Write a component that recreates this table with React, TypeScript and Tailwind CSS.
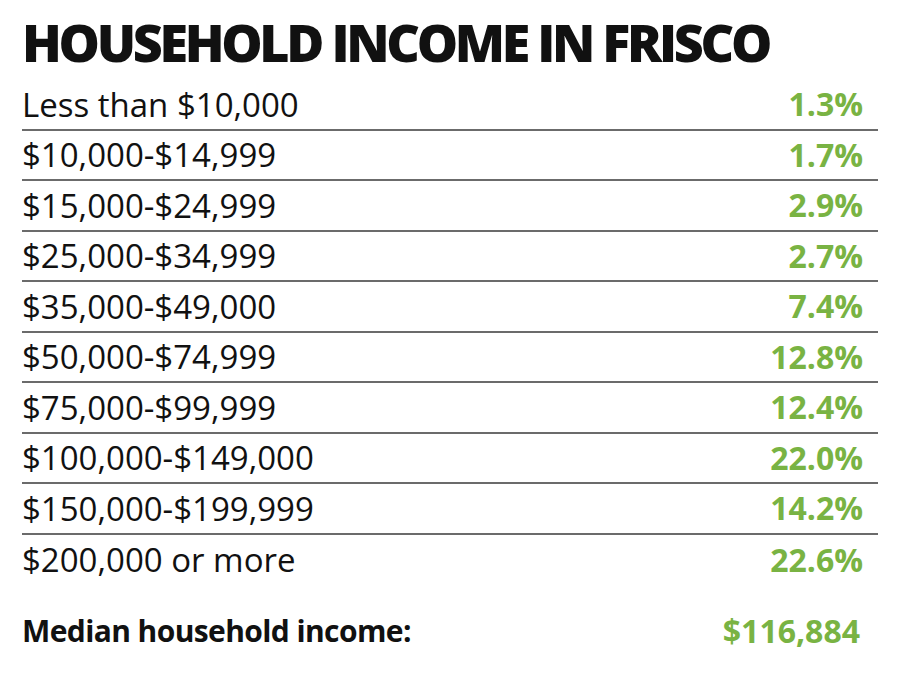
const rows = [
  { label: 'Less than $10,000', pct: '1.3%' },
  { label: '$10,000-$14,999', pct: '1.7%' },
  { label: '$15,000-$24,999', pct: '2.9%' },
  { label: '$25,000-$34,999', pct: '2.7%' },
  { label: '$35,000-$49,000', pct: '7.4%' },
  { label: '$50,000-$74,999', pct: '12.8%' },
  { label: '$75,000-$99,999', pct: '12.4%' },
  { label: '$100,000-$149,000', pct: '22.0%' },
  { label: '$150,000-$199,999', pct: '14.2%' },
  { label: '$200,000 or more', pct: '22.6%' },
];

export default function App() {
  return (
    <div className="w-[900px] h-[674px] bg-white text-[#111] px-[22px] pt-[16px] font-['Open_Sans',sans-serif]">
      <h1 className="text-[52px] leading-[52px] font-extrabold tracking-[-3.3px]">HOUSEHOLD INCOME IN FRISCO</h1>

      <div className="mt-[12px]">
        {rows.map((row, i) => (
          <div
            key={row.label}
            className={`h-[50.5px] flex items-center justify-between pr-[15px] ${i < rows.length - 1 ? 'border-b-2 border-[#6b6b6b]' : ''}`}
          >
            <span className="text-[33px] leading-none">{row.label}</span>
            <span className="text-[32px] leading-none font-bold text-[#79b343]">{row.pct}</span>
          </div>
        ))}
      </div>

      <div className="mt-[30px] flex items-center justify-between pr-[18px]">
        <span className="text-[30px] leading-none font-bold tracking-[-0.6px]">Median household income:</span>
        <span className="text-[32px] leading-none font-bold text-[#79b343]">$116,884</span>
      </div>
    </div>
  );
}
